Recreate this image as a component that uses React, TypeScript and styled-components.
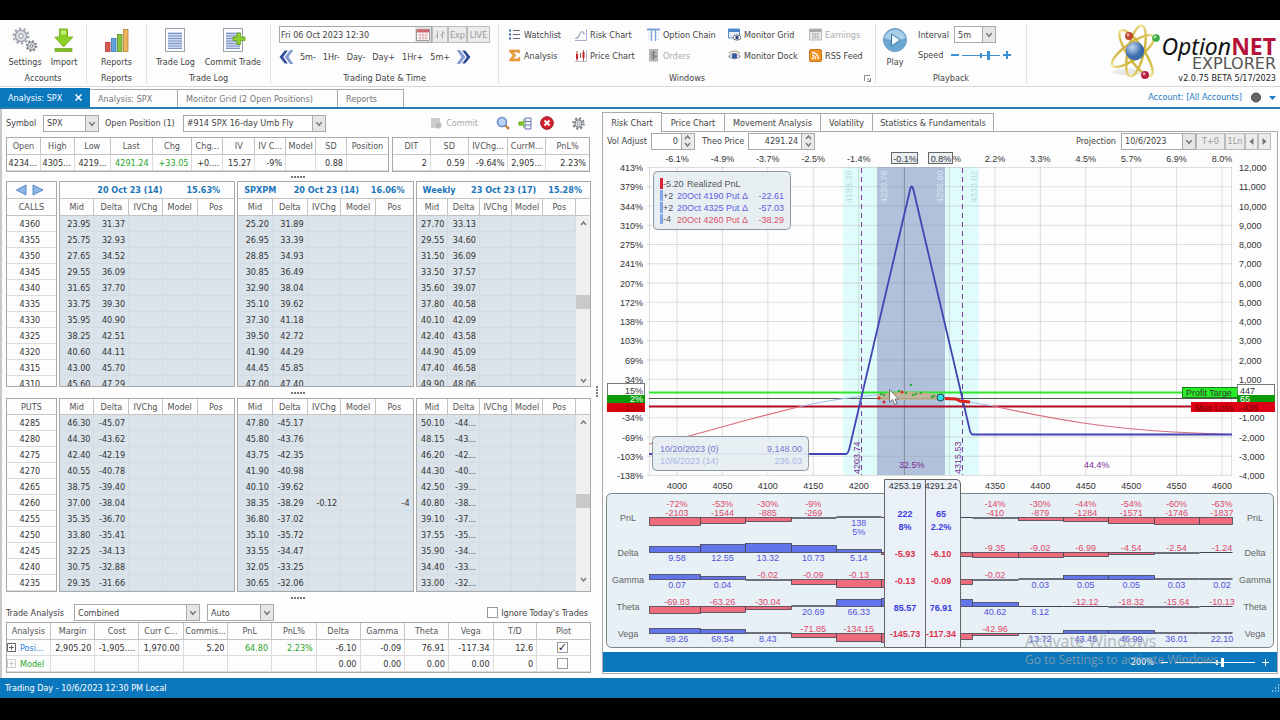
import React from "react";
import styled, { createGlobalStyle } from "styled-components";

const ui = `"DejaVu Sans Condensed", "Noto Sans", sans-serif`;
const plotFont = `"Liberation Sans", Arial, sans-serif`;
const blue = "#0b78be";
const line = "#a9a9a9";

const Global = createGlobalStyle`
  *, *::before, *::after { box-sizing: border-box; }
  body { margin: 0; background: #000; color: #444; font: 9px/12px ${ui}; }
  button, input, select { font: inherit; color: inherit; margin: 0; padding: 0; border: 0; background: none; border-radius: 0; outline: 0; }
  svg { display: block; flex: none; }
  h1, p { margin: 0; font-weight: 400; }
`;

const Screen = styled.div`padding: 20px 0 23px;`;
const AppWindow = styled.main`background: #fdfdfd;`;

/* ---------- ribbon ---------- */
const Ribbon = styled.header`
  display: flex; height: 67px; padding-top: 4px; border-bottom: 1px solid #d8d8d8;
`;
const Group = styled.section<{ $w: number }>`
  display: flex; flex-direction: column; justify-content: space-between;
  flex: 0 1 ${p => p.$w}px; height: 60px; padding: 0 6px;
  border-right: 1px solid #e2e2e2;
`;
const GroupBody = styled.div<{ $around?: boolean }>`
  display: flex; justify-content: ${p => (p.$around ? "space-around" : "flex-start")}; gap: ${p => (p.$around ? 4 : 8)}px;
`;
const Caption = styled.div`
  position: relative; text-align: center; line-height: 12px; white-space: nowrap;
  svg { position: absolute; right: -2px; top: 3px; }
`;
const BigButton = styled.button`
  display: flex; flex-direction: column; align-items: center; gap: 3px; padding-top: 3px; white-space: nowrap;
`;
const Stack = styled.div`display: flex; flex-direction: column; gap: 6px; width: 100%; padding: 2px 2px 0;`;
const Line = styled.div<{ $gap?: number; $between?: boolean }>`
  display: flex; align-items: center; gap: ${p => p.$gap ?? 0}px;
  justify-content: ${p => (p.$between ? "space-between" : "flex-start")};
`;
const DateBox = styled.div`
  display: flex; flex: 1; height: 17px; border: 1px solid ${line};
  input { flex: 1; min-width: 0; padding-left: 1px; }
  button { width: 16px; background: #e4dede; display: grid; place-items: center; }
`;
const FlatButton = styled.button<{ $w: number }>`
  width: ${p => p.$w}px; height: 17px; border: 1px solid #bcbcbc; background: #ebebeb; color: #999;
  display: grid; place-items: center;
`;
const StepButton = styled.button`height: 16px; white-space: nowrap;`;
const ToolGrid = styled.div`
  display: grid; grid-template-columns: 66px 73px 81px 81px 60px; grid-auto-rows: 21px; padding-left: 3px;
`;
const Tool = styled.button<{ $off?: boolean }>`
  display: flex; align-items: center; gap: 3px; white-space: nowrap; color: ${p => (p.$off ? "#aaa" : "inherit")};
`;
const Brand = styled.div`
  display: flex; justify-content: flex-end; flex: 1; padding-right: 4px; color: #111;
`;
const BrandText = styled.div`display: flex; flex-direction: column; align-items: flex-end; padding-top: 10px;`;
const BrandName = styled.h1`
  font: italic 23px/24px "Noto Sans", sans-serif;
  b { font-style: normal; font-weight: 700; color: #b5123a; }
`;
const BrandSub = styled.p`font: 16px/12px "DejaVu Sans", sans-serif; color: #555;`;
const Version = styled.p`line-height: 17px; color: #222;`;

/* ---------- tabs ---------- */
const TabStrip = styled.nav`
  display: flex; align-items: flex-end; height: 22px; border-bottom: 2px solid #2a7db4;
`;
const DocTab = styled.button<{ $w: number; $active?: boolean }>`
  width: ${p => p.$w}px; height: ${p => (p.$active ? 19 : 18)}px; padding: 0 8px; text-align: left;
  display: flex; align-items: center; justify-content: space-between; white-space: nowrap;
  background: ${p => (p.$active ? blue : "#fdfdfd")}; color: ${p => (p.$active ? "#fff" : "#777")};
  border: solid ${line}; border-width: ${p => (p.$active ? "0" : "1px 1px 0 0")};
`;
const Account = styled.a`
  display: flex; align-items: center; align-self: center; gap: 8px; margin-left: auto; padding-right: 4px; color: #1b7bc4; text-decoration: none;
`;

/* ---------- shared controls ---------- */
const Picker = styled.span<{ $w: number }>`
  display: inline-flex; position: relative; width: ${p => p.$w}px; height: 17px; border: 1px solid ${line}; background: #fff;
  select { appearance: none; flex: 1; min-width: 0; padding-left: 3px; }
  svg { position: absolute; right: 0; top: 0; width: 13px; height: 15px; background: #e6e6e6; border-left: 1px solid ${line}; pointer-events: none; }
`;
const Spin = styled.span<{ $w: number }>`
  display: inline-flex; width: ${p => p.$w}px; height: 17px; border: 1px solid ${line}; background: #fff;
  input { flex: 1; min-width: 0; text-align: right; padding-right: 3px; }
`;
const SpinButtons = styled.span`
  display: flex; flex-direction: column; width: 13px; background: #eaeaea; border-left: 1px solid ${line};
  button { flex: 1; display: grid; place-items: center; }
`;
const Slider = styled.input<{ $c: string; $w: number; $mark: number }>`
  appearance: none; width: ${p => p.$w}px; height: 10px;
  background:
    linear-gradient(${p => p.$c}, ${p => p.$c}) ${p => p.$mark}% 50% / 2px 5px no-repeat,
    linear-gradient(${p => p.$c}, ${p => p.$c}) center / 100% 1px no-repeat;
  &::-webkit-slider-thumb { appearance: none; width: 3px; height: 9px; background: ${p => p.$c}; }
`;

/* ---------- work area ---------- */
const Work = styled.div`display: grid; grid-template-columns: 602fr 678fr;`;
const Left = styled.section`
  position: relative; border-left: 2px solid #c8c8c8; padding: 0 11px 5px 4px; min-width: 0;
`;
const Bar = styled.div<{ $h: number }>`
  display: flex; align-items: center; height: ${p => p.$h}px; white-space: nowrap;
`;
const Space = styled.span<{ $w?: number }>`flex: ${p => (p.$w ? `0 1 ${p.$w}px` : "1")};`;
const IconButton = styled.button`display: flex; align-items: center; gap: 4px; color: #aaa;`;
const Splitter = styled.div<{ $h: number }>`
  height: ${p => p.$h}px; display: grid; place-items: center;
  &::after { content: ""; width: 15px; height: 2px; background: repeating-linear-gradient(90deg, #777 0 2px, transparent 2px 3px); }
`;
const SideGrip = styled.div`
  position: absolute; right: 4px; top: 277px; width: 2px; height: 12px;
  background: repeating-linear-gradient(#777 0 2px, transparent 2px 3px);
`;
const Pair = styled.div`display: grid; grid-template-columns: 383fr 198fr; gap: 3px; margin-right: 1px;`;
const Chains = styled.div<{ $h: number }>`
  display: grid; grid-template-columns: 51fr 177fr 177fr 176fr; gap: 2px; height: ${p => p.$h}px; overflow: hidden;
`;
const Frame = styled.div`border: 1px solid ${line}; overflow: hidden; min-width: 0;`;
const Grid = styled.table<{ $shade?: boolean; $center?: boolean }>`
  width: 100%; table-layout: fixed; border-collapse: separate; border-spacing: 0; color: #333;
  th { height: 17px; padding: 0; font-weight: 400; color: #555; line-height: 14px; overflow: hidden; white-space: nowrap;
    border-right: 1px solid #c4c4c4; border-bottom: 1px solid #c4c4c4; }
  td { height: 16px; padding: 0 3px 0 0; line-height: 14px; text-align: ${p => (p.$center ? "center" : "right")};
    white-space: nowrap; overflow: hidden;
    background: ${p => (p.$shade ? "#dae2ea" : "transparent")};
    border-right: 1px solid ${p => (p.$shade ? "#d3dbe3" : "#dcdcdc")}; border-bottom: 1px solid ${p => (p.$shade ? "#d3dbe3" : "#dcdcdc")}; }
  th:last-child, td:last-child { border-right: 0; }
  &&& td.scroll { padding: 0; background: #f0f0f0; vertical-align: top; border: 0; }
`;
const HeadRow = styled.tr<{ $h: number }>`th { height: ${p => p.$h}px; }`;
const Expiry = styled.div<{ $wide?: boolean }>`
  display: flex; justify-content: flex-end; gap: ${p => (p.$wide ? 24 : 12)}px; padding: 0 ${p => (p.$wide ? 14 : 8)}px 0 6px;
  font-weight: 700; color: #1b75bb;
  span:first-child { margin-right: auto; }
`;
const ScrollTrack = styled.div`
  display: flex; flex-direction: column; align-items: center; justify-content: space-between; height: 172px; padding: 5px 0;
  i { width: 14px; height: 14px; background: #c9c9c9; }
`;
const Tone = styled.span<{ $c: string }>`color: ${p => p.$c};`;
const NameCell = styled.span<{ $c: string }>`
  display: flex; align-items: center; gap: 4px; color: ${p => p.$c};
`;
const PlotCell = styled.span`display: flex; align-items: center; justify-content: center; height: 14px;`;
const Check = styled.input`
  appearance: none; display: inline-grid; place-items: center; vertical-align: middle; width: 11px; height: 11px; border: 1px solid #999; background: #fff;
  &:checked::after { content: "✓"; font: bold 11px/9px "DejaVu Sans", sans-serif; color: #222; }
`;
const CheckLabel = styled.label`display: flex; align-items: center; gap: 3px; padding-right: 3px;`;

/* ---------- risk panel ---------- */
const Right = styled.section`padding: 3px 2px 0 0; min-width: 0; position: relative;`;
const PanelTabs = styled.nav`display: flex; align-items: flex-end; height: 20px; border-bottom: 1px solid ${line};`;
const PanelTab = styled.button<{ $w: number; $active?: boolean }>`
  width: ${p => p.$w}px; height: ${p => (p.$active ? 20 : 18)}px; margin-bottom: ${p => (p.$active ? -1 : 0)}px;
  border: solid ${line}; border-width: 1px 1px 0 ${p => (p.$active ? 1 : 0)}px; background: #fdfdfd; white-space: nowrap;
`;
const Panel = styled.div`border: solid ${line}; border-width: 0 1px 1px; padding-bottom: 1px;`;
const Plot = styled.svg`
  width: 100%; height: auto; font-family: ${plotFont}; font-size: 9px; fill: #333;
`;
const ZoomBar = styled.div`
  display: flex; align-items: center; justify-content: flex-end; gap: 7px; height: 20px; padding-right: 8px; background: ${blue}; color: #fff;
`;
const Watermark = styled.div`
  position: absolute; right: 55px; bottom: 10px; width: 200px; color: rgba(160, 165, 170, .75); font: 12px/17px "Open Sans", sans-serif; white-space: nowrap; pointer-events: none;
  strong { display: block; font-size: 16px; line-height: 20px; font-weight: 400; }
`;
const Status = styled.footer`display: flex; justify-content: space-between; align-items: center; height: 20px; padding: 0 0 0 5px; background: ${blue}; color: #fff;`;

/* ---------- icons ---------- */
const Gear = ({ s = 14, c = "#8d929a" }: { s?: number; c?: string }) => (
  <svg width={s} height={s} viewBox="0 0 16 16">
    <circle cx="8" cy="8" r="6.4" fill="none" stroke={c} strokeWidth="2.6" strokeDasharray="2.5 2.52" />
    <circle cx="8" cy="8" r="4.4" fill="#dfe2e7" stroke={c} strokeWidth="1.6" />
    <circle cx="8" cy="8" r="1.7" fill="#fff" stroke={c} />
  </svg>
);
const Settings = () => (
  <svg width="26" height="26" viewBox="0 0 26 26">
    <circle cx="9" cy="9" r="7.4" fill="none" stroke="#a3a8b0" strokeWidth="2.2" strokeDasharray="2.4 2.25" />
    <circle cx="9" cy="9" r="5.6" fill="#dfe2e7" stroke="#9ba0a8" strokeWidth="1.4" />
    <circle cx="9" cy="9" r="2.2" fill="#fff" stroke="#888" />
    <circle cx="19.5" cy="19" r="5" fill="none" stroke="#868b94" strokeWidth="1.8" strokeDasharray="1.9 2.02" />
    <circle cx="19.5" cy="19" r="3.8" fill="#d9dce2" stroke="#7f848d" strokeWidth="1.2" />
    <circle cx="19.5" cy="19" r="1.3" fill="#fff" stroke="#777" />
  </svg>
);
const Import = () => (
  <svg width="20" height="26" viewBox="0 0 20 26">
    <path d="M5.500 2h8v8h5.500L9.500 20 0.800 10h4.700z" fill="#8ccf23" stroke="#7db32d" />
    <path d="M7 3.500h5v4H7z" fill="#c2ec79" />
    <rect x="1" y="21.500" width="17" height="3" fill="#7cbd1e" stroke="#669c16" strokeWidth=".6" />
  </svg>
);
const BarsIcon = () => (
  <svg width="26" height="26" viewBox="0 0 26 26" strokeWidth=".8">
    <rect x="1.5" y="15.5" width="4.5" height="9" fill="#d95b54" stroke="#a93632" />
    <rect x="7.5" y="11.5" width="4.5" height="13" fill="#5fa1dc" stroke="#3a73ad" />
    <rect x="13.5" y="7.5" width="4.5" height="17" fill="#86c440" stroke="#5a9224" />
    <rect x="19.5" y="2.5" width="4.5" height="22" fill="#eab35c" stroke="#b98333" />
  </svg>
);
const Sheet = ({ plus }: { plus?: boolean }) => (
  <svg width="26" height="26" viewBox="0 0 26 26">
    <path d="M3.500 1.500h19v23h-19z" fill="#fbfcfe" stroke="#9aa2ae" />
    <path d="M6 5h14v17H6z" fill="#c9d6ef" />
    <path d="M6 6.500h14M6 9h14M6 11.500h14M6 14h14M6 16.500h14M6 19h14M6 21.500h14" stroke="#7f96c4" />
    {plus && <path d="M17 6h3.500v4h4.500v3.500h-4.500v4H17v-4h-4v-3.500h4z" fill="#8fce2f" stroke="#5f9c17" strokeWidth=".8" />}
  </svg>
);
const Double = ({ flip }: { flip?: boolean }) => (
  <svg width="14" height="14" viewBox="0 0 14 14">
    <g transform={flip ? "matrix(-1 0 0 1 14 0)" : undefined}>
      <path d="M5.800 .5h3L4.200 7l4.600 6.500h-3L.5 7z" fill="#2f4c99" />
      <path d="M11 .5h2.700L9 7l4.700 6.500H11L6.200 7z" fill="#8aa2d8" stroke="#4a66b0" strokeWidth=".5" />
    </g>
  </svg>
);
const Play = () => (
  <svg width="26" height="26" viewBox="0 0 26 26">
    <circle cx="13" cy="13" r="11.5" fill="#6ba7d3" stroke="#6f9dc0" />
    <path d="M2.500 11a10.800 10.800 0 0 1 21 0q-10 5-21 0z" fill="#a9cfe9" />
    <path d="M9.500 7l9 6-9 6z" fill="#f5faff" stroke="#3873a8" />
  </svg>
);
const Caret = () => (
  <svg viewBox="0 0 13 15"><path d="M3.500 6l3 3.500 3-3.500" fill="none" stroke="#777" strokeWidth="1.600" /></svg>
);
const Mini = ({ up }: { up?: boolean }) => (
  <svg width="7" height="5" viewBox="0 0 7 5"><path d={up ? "M1 4l2.500-3L6 4" : "M1 1l2.500 3L6 1"} fill="none" stroke="#777" strokeWidth="1.400" /></svg>
);
const Expander = ({ dim }: { dim?: boolean }) => (
  <svg width="9" height="9" viewBox="0 0 9 9" stroke={dim ? "#ccc" : "#666"} fill="none"><path d="M.5.5h8v8h-8zM2 4.500h5M4.500 2v5" /></svg>
);
const Nav = () => (
  <svg width="48" height="12" viewBox="0 0 48 12" fill="#8db8e6" stroke="#3b76bd" strokeWidth=".8">
    <path d="M19 1v10L9.500 6zM26 1v10L36 6z" />
  </svg>
);
const toolIcons: Record<string, React.ReactNode> = {
  Watchlist: <><path d="M1 2.500h2M1 6.500h2M1 10.500h2" stroke="#3767ae" strokeWidth="2" /><path d="M5 2.500h7M5 6.500h7M5 10.500h7" stroke="#667" strokeWidth="1.200" /></>,
  Analysis: <path d="M1.500 1h10v3h-1l-1-1H5l3 3.500L4.700 10H9.500l1-1.500h1.300V12H1.500v-1.300L5 6.500 1.500 2.500z" fill="#eba03a" stroke="#cf7f1c" strokeWidth=".5" />,
  "Risk Chart": <><path d="M12.500 1v11.500H1" fill="none" stroke="#aac" /><path d="M1 10.500q3 0 4-3t3-4q2 0 2 3" fill="none" stroke="#9ab" strokeWidth="1.200" /></>,
  "Price Chart": <><path d="M3 2v10M6.500 4v5M9.500 1v11" stroke="#a55" /><path d="M2 5h2v5H2zM8.500 3h2v6h-2z" fill="#c22" /><path d="M12.500 1v11.500H1" fill="none" stroke="#bbc" /></>,
  "Option Chain": <><path d="M0 1.500h13" stroke="#7aa3da" strokeWidth="2" /><path d="M1 5h3M9 5h3M1 8h3M9 8h3M1 11h3M9 11h3" stroke="#d5dfec" /><path d="M4.500 2v11M8.500 2v11" stroke="#7aa3da" strokeWidth="1.300" /></>,
  Orders: <><path d="M2 0h9v12.500H2z" fill="#b5b5b5" /><path d="M8.500 4q-4-1.500-4 .7T8.500 7t-4 1.700M6.500 2v9" fill="none" stroke="#777" /></>,
  "Monitor Grid": <><path d="M.5 1h11v9H.5z" fill="#e4edf8" stroke="#5b8fd0" /><path d="M.5 1h11v3H.5z" fill="#4b86cc" /><ellipse cx="9" cy="9.5" rx="4" ry="2.6" fill="#fff" stroke="#666" /><circle cx="9" cy="9.5" r="1.7" fill="#27408b" /></>,
  "Monitor Dock": <><path d="M.5 7.500Q6.500 1 12.500 7.500 6.500 12 .5 7.500z" fill="#e6ebf5" stroke="#888" /><circle cx="6.5" cy="7" r="2.6" fill="#3459a6" /><path d="M1 4q5.500-4 11 0" fill="none" stroke="#987" /></>,
  Earnings: <><path d="M.5 1h12v11H.5z" fill="#e8e8e8" stroke="#bbb" /><path d="M.5 2.500h12" stroke="#aaa" strokeWidth="3" /><path d="M3 6h7M3 9h7M4 5v6M6.500 5v6M9 5v6" stroke="#bbb" /></>,
  "RSS Feed": <><rect x=".5" y=".5" width="12" height="12" rx="1.5" fill="#ee9527" stroke="#c9741a" /><path d="M3 3.500a6.500 6.500 0 0 1 6.500 6.500M3 6.300A3.700 3.700 0 0 1 6.700 10" fill="none" stroke="#fff" strokeWidth="1.300" /><circle cx="3.8" cy="9.3" r="1.1" fill="#fff" /></>,
};
const tools = ["Watchlist", "Risk Chart", "Option Chain", "Monitor Grid", "Earnings", "Analysis", "Price Chart", "Orders", "Monitor Dock", "RSS Feed"];

const Atom = () => (
  <svg width="52" height="58" viewBox="0 0 52 58">
    <defs>
      <radialGradient id="nucleus" cx=".35" cy=".3"><stop offset="0" stopColor="#c5dbf3" /><stop offset="1" stopColor="#3c6cad" /></radialGradient>
      <linearGradient id="orbit" x2="1"><stop offset="0" stopColor="#cdb23a" /><stop offset=".5" stopColor="#f4e79c" /><stop offset="1" stopColor="#cfb232" /></linearGradient>
    </defs>
    <ellipse cx="20" cy="48" rx="16" ry="3.5" fill="#e8e8e8" />
    <g fill="none" stroke="url(#orbit)" strokeWidth="2.400">
      <ellipse cx="27" cy="27" rx="8" ry="26" transform="rotate(13 27 27)" />
      <ellipse cx="27" cy="29" rx="8" ry="27" transform="rotate(-34 27 29)" />
      <ellipse cx="24" cy="27" rx="8" ry="25" transform="rotate(55 24 27)" />
    </g>
    <circle cx="26" cy="27" r="9.3" fill="url(#nucleus)" />
    <circle cx="20" cy="12" r="4" fill="#c04a33" /><circle cx="19" cy="11" r="1.4" fill="#f0b5a5" />
    <circle cx="47" cy="14" r="3.8" fill="#38a83d" /><circle cx="46" cy="13" r="1.4" fill="#b5eab5" />
    <circle cx="36" cy="51" r="4" fill="#b8203f" /><circle cx="35" cy="50" r="1.4" fill="#efa5b5" />
  </svg>
);

/* ---------- data ---------- */
const calls: string[][] = `4360 23.95 31.37 25.20 31.89 27.70 33.13
4355 25.75 32.93 26.95 33.39 29.55 34.60
4350 27.65 34.52 28.85 34.93 31.50 36.09
4345 29.55 36.09 30.85 36.49 33.50 37.57
4340 31.65 37.70 32.90 38.04 35.60 39.07
4335 33.75 39.30 35.10 39.62 37.80 40.58
4330 35.95 40.90 37.30 41.18 40.10 42.09
4325 38.25 42.51 39.50 42.72 42.40 43.58
4320 40.60 44.11 41.90 44.29 44.90 45.09
4315 43.00 45.70 44.45 45.85 47.40 46.58
4310 45.60 47.29 47.00 47.40 49.90 48.06`.split("\n").map(r => r.split(" "));
const puts: string[][] = `4285 46.30 -45.07 47.80 -45.17 50.10 -44...
4280 44.30 -43.62 45.80 -43.76 48.15 -43...
4275 42.40 -42.19 43.75 -42.35 46.20 -42...
4270 40.55 -40.78 41.90 -40.98 44.30 -40...
4265 38.75 -39.40 40.10 -39.62 42.50 -39...
4260 37.00 -38.04 38.35 -38.29 40.80 -38...
4255 35.35 -36.70 36.80 -37.02 39.10 -37...
4250 33.80 -35.41 35.10 -35.72 37.55 -35...
4245 32.25 -34.13 33.55 -34.47 35.90 -34...
4240 30.75 -32.88 32.05 -33.25 34.40 -33...
4235 29.35 -31.66 30.65 -32.06 33.00 -32...`.split("\n").map(r => r.split(" "));
const expiries = [["", "20 Oct 23 (14)", "15.63%"], ["SPXPM", "20 Oct 23 (14)", "16.06%"], ["Weekly", "23 Oct 23 (17)", "15.28%"]];

const Cols = ({ w }: { w: number[] }) => {
  const total = w.reduce((a, b) => a + b, 0);
  return <colgroup>{w.map((n, i) => <col key={i} style={{ width: `${(n / total) * 100}%` }} />)}</colgroup>;
};

function Chain({ rows, title, withExpiry, height }: { rows: string[][]; title: string; withExpiry?: boolean; height: number }) {
  const h = withExpiry ? 17 : 16;
  return (
    <Chains $h={height}>
      <Frame>
        <Grid $center>
          <thead>
            {withExpiry && <HeadRow $h={17}><th><Nav /></th></HeadRow>}
            <HeadRow $h={h}><th>{title}</th></HeadRow>
          </thead>
          <tbody>{rows.map(r => <tr key={r[0]}><td>{r[0]}</td></tr>)}</tbody>
        </Grid>
      </Frame>
      {[0, 1, 2].map(g => (
        <Frame key={g}>
          <Grid $shade>
            <Cols w={g === 2 ? [32, 32, 32, 32, 33, 14] : [35, 35, 34, 35, 37]} />
            <thead>
              {withExpiry && (
                <HeadRow $h={17}><th colSpan={g === 2 ? 6 : 5}>
                  <Expiry $wide={g === 0}>{expiries[g].map((t, i) => <span key={i}>{t}</span>)}</Expiry>
                </th></HeadRow>
              )}
              <HeadRow $h={h}>
                {["Mid", "Delta", "IVChg", "Model", "Pos"].map(t => <th key={t}>{t}</th>)}
                {g === 2 && <th />}
              </HeadRow>
            </thead>
            <tbody>
              {rows.map((r, i) => {
                const held = g === 1 && r[0] === "4260" && !withExpiry;
                return (
                  <tr key={r[0]}>
                    <td>{r[1 + g * 2]}</td><td>{r[2 + g * 2]}</td><td>{held && "-0.12"}</td><td /><td>{held && "-4"}</td>
                    {g === 2 && i === 0 && (
                      <td className="scroll" rowSpan={rows.length}><ScrollTrack><Mini up /><i /><Mini /></ScrollTrack></td>
                    )}
                  </tr>
                );
              })}
            </tbody>
          </Grid>
        </Frame>
      ))}
    </Chains>
  );
}

/* ---------- risk plot ---------- */
const px = (price: number) => 74 + (price - 4000) * 0.9083;
const strikes = Array.from({ length: 13 }, (_, i) => 4000 + i * 50);
const moves = ["-6.1%", "-4.9%", "-3.7%", "-2.5%", "-1.4%", "", "", "2.2%", "3.3%", "4.5%", "5.7%", "6.9%", "8.0%"];
const percents = [413, 379, 344, 310, 275, 241, 207, 172, 138, 103, 69, 34, 0, -34, -69, -103, -138];

type Strip = { name: string; base: number; bars: number[]; values: string[]; pct?: string[] };
const strips: Strip[] = [
  { name: "PnL", base: 367, bars: [8, 6, 4, 1, -1, 0, 0, 1, 3, 4, 6, 7, 7], values: ["-2103", "-1544", "-885", "-269", "138", "", "", "-410", "-879", "-1284", "-1571", "-1746", "-1837"], pct: ["-72%", "-53%", "-30%", "-9%", "5%", "", "", "-14%", "-30%", "-44%", "-54%", "-60%", "-63%"] },
  { name: "Delta", base: 402, bars: [-6, -8, -9, -7, -3, 2, 4, 5, 5, 4, 2, 1, 0], values: ["9.58", "12.55", "13.32", "10.73", "5.14", "", "", "-9.35", "-9.02", "-6.99", "-4.54", "-2.54", "-1.24"] },
  { name: "Gamma", base: 429, bars: [-5, -3, 1, 5, 8, 8, 5, 1, -1, -4, -4, -1, -1], values: ["0.07", "0.04", "-0.02", "-0.09", "-0.13", "", "", "-0.02", "0.03", "0.05", "0.05", "0.03", "0.02"] },
  { name: "Theta", base: 456, bars: [7, 6, 3, -1, -7, -8, -7, -4, 0, 0, 1, 1, 0], values: ["-69.83", "-63.26", "-30.04", "20.69", "66.33", "", "", "40.62", "8.12", "-12.12", "-18.32", "-15.64", "-10.13"] },
  { name: "Vega", base: 483, bars: [-5, -4, -1, 4, 8, 9, 6, 2, 0, -3, -3, -1, -1], values: ["89.26", "68.54", "8.43", "-71.85", "-134.15", "", "", "-42.96", "13.72", "43.45", "46.99", "36.01", "22.10"] },
];
const focus = [
  { x: 302, price: "4253.19", v: ["222", "8%", "-5.93", "-0.13", "85.57", "-145.73"] },
  { x: 338, price: "4291.24", v: ["65", "2.2%", "-6.10", "-0.09", "76.91", "-117.34"] },
];
const focusY = [367, 380, 407, 434, 461, 487];
const green = "#3a3", red = "#d22";
const legs = [["#5f5fe0", "20Oct 4190 Put Δ", "-22.61"], ["#5f5fe0", "20Oct 4325 Put Δ", "-57.03"], ["#e0506a", "20Oct 4260 Put Δ", "-38.29"]];

function RiskPlot() {
  return (
    <Plot viewBox="0 0 674 502" role="img" aria-label="Risk chart">
      <rect x="240" y="17" width="136" height="308" fill="#dffcfa" />
      <rect x="274" y="17" width="68" height="308" fill="#b1c1db" />
      <g stroke="#888" strokeOpacity=".26">
        {strikes.map(s => <path key={s} d={`M${px(s)} 17V325`} />)}
        {percents.map((_, i) => <path key={i} d={`M44 ${17.5 + i * 19.25}H629`} />)}
        <path d="M46.500 17V325M628.500 17V325" />
      </g>
      {strikes.map((s, i) => (
        <g key={s} textAnchor="middle">
          <text x={px(s)} y="12">{moves[i]}</text>
          {s !== 4250 && s !== 4300 && <text x={px(s)} y="339">{s}</text>}
        </g>
      ))}
      {percents.map((p, i) => p !== 0 && (
        <g key={p}>
          <text x="40" y={21 + i * 19.25} textAnchor="end">{p}%</text>
          <text x="636" y={21 + i * 19.25}>{(12000 - i * 1000).toLocaleString("en-US")}</text>
        </g>
      ))}
      <g fill="#e9eff3" stroke="#666"><rect x="288.5" y="2.5" width="26" height="11" /><rect x="325.5" y="2.5" width="24" height="11" /></g>
      <g textAnchor="middle"><text x="302" y="12">-0.1%</text><text x="338" y="12">0.8%</text><text x="354" y="12">%</text></g>

      <g fill="#b5dcdc">
        <text transform="translate(249 53) rotate(-90)">4183.36</text>
        <text transform="translate(374 53) rotate(-90)">4333.02</text>
      </g>
      <g fill="#d9e3f0">
        <text transform="translate(284 53) rotate(-90)">4220.78</text>
        <text transform="translate(340 53) rotate(-90)">4295.60</text>
      </g>
      <path d="M301.500 17V325" stroke="#8a93a3" />
      <g stroke="#7b3b9b" strokeDasharray="5 4"><path d="M258.500 18V325" /><path d="M359.500 18V325" /></g>

      <path d="M46 242.500H580" stroke="#2be82b" strokeWidth="2" />
      <path d="M46 248.500H634" stroke="#555" />
      <path d="M46 256.500H590" stroke="#b00a22" strokeWidth="2" />
      <path d="M274 246Q300 238 338 245L342 247V250H274z" fill="#c2b48f" opacity=".8" />
      <path d="M46 294Q64 291 88 285.500L144 270 197 256.500" fill="none" stroke="#e0697a" strokeWidth="1.200" />
      <path d="M197 256.500Q235 248 274 245" fill="none" stroke="#a5b8e8" strokeWidth="1.200" />
      <path d="M274 245Q305 240 338 247" fill="none" stroke="#dda08c" />
      <path d="M338 247L390 256" fill="none" stroke="#a5b8e8" />
      <path d="M390 256Q440 267 480 273T570 282L628 284.500" fill="none" stroke="#d97080" strokeWidth="1.200" />
      <path d="M46 304H243Q245 304 246.500 298L307 40Q308.500 33 310.500 40L367 281Q368 284.500 370 284.500H629" fill="none" stroke="#4343b4" strokeWidth="1.800" />
      <path d="M342 248.500L353 249 357 251 367 252" fill="none" stroke={red} strokeWidth="3" />
      {[[308, 235], [281, 245], [287, 246], [296, 241], [303, 243], [310, 245], [313, 244], [318, 243], [329, 247], [331, 246], [278, 244]].map(([x, y]) => <circle key={x} cx={x} cy={y} r="1.3" fill={green} />)}
      {[[276, 248], [281, 252], [299, 242]].map(([x, y]) => <circle key={x} cx={x} cy={y} r="1.5" fill={red} />)}
      <circle cx="337.5" cy="247.5" r="3.5" fill="#2ee0e6" stroke="#145" />
      <path d="M286.500 239.500V252L289.500 249.500 292 254.500 294 253.500 292 249H295.500z" fill="#fff" stroke="#555" strokeWidth=".8" />

      <g fill="#7d2a94">
        <text transform="translate(257 324) rotate(-90)">4203.74</text>
        <text transform="translate(358 324) rotate(-90)">4315.53</text>
        <text x="296" y="318">32.5%</text><text x="481" y="318">44.4%</text>
      </g>

      <rect x="4.5" y="233.5" width="37" height="12" fill="#fff" stroke="#777" />
      <rect x="4" y="245" width="38" height="8" fill="#0a9a0a" /><rect x="4" y="253" width="38" height="9" fill="#d9000f" />
      <g textAnchor="end"><text x="40" y="244">15%</text><text x="40" y="252" fill="#fff">2%</text><text x="40" y="261" fill="#900">-15%</text></g>
      <rect x="579.5" y="237.5" width="56" height="10" fill="#27ec27" stroke="#197f19" />
      <text x="583" y="246">Profit Targe</text>
      <rect x="588" y="252" width="84" height="10" fill="#dc0016" />
      <text x="592" y="261" fill="#700">Max Loss</text><text x="637" y="261" fill="#700">-436</text>
      <rect x="634.5" y="234.5" width="37" height="11" fill="#fff" stroke="#777" />
      <rect x="634" y="245" width="38" height="7" fill="#0a9a0a" />
      <text x="637" y="244">447</text><text x="637" y="252" fill="#fff">65</text>

      <rect x="50.5" y="21.5" width="137" height="58" rx="4" fill="#e6eef2" fillOpacity=".93" stroke="#8d979d" />
      <rect x="57" y="28" width="3" height="11" fill="#e0213c" />
      <path d="M58.500 40V51M58.500 52V63M58.500 64V74" stroke="#86a5e6" strokeWidth="3" />
      <g fill="#555">
        <text x="60" y="37">-5.20</text><text x="84" y="37">Realized PnL</text><text x="60" y="49">+2</text><text x="60" y="61">+2</text><text x="60" y="72">-4</text>
      </g>
      {legs.map(([c, t, v], i) => (
        <g key={t} fill={c}><text x="74" y={49 + i * 12}>{t}</text><text x="181" y={49 + i * 12} textAnchor="end">{v}</text></g>
      ))}
      <rect x="49.5" y="286.5" width="156" height="34" rx="4" fill="#e6eef2" fillOpacity=".94" stroke="#8d979d" />
      <g fill="#7676cf"><text x="57" y="302">10/20/2023 (0)</text><text x="199" y="302" textAnchor="end">9,148.00</text></g>
      <g fill="#a9b8e6"><text x="57" y="314">10/6/2023 (14)</text><text x="199" y="314" textAnchor="end">236.03</text></g>

      <rect x="3.5" y="343.5" width="667" height="154" rx="5" fill="#e7f0f5" stroke="#7c8588" />
      {strips.map(s => (
        <g key={s.name}>
          <text x="25" y={s.base + 4} fill="#666" textAnchor="middle">{s.name}</text>
          <text x="652" y={s.base + 4} fill="#666" textAnchor="middle">{s.name}</text>
          {s.bars.map((b, i) => {
            const x0 = i ? Math.round(px(strikes[i] - 25)) : 46;
            const x1 = i < 12 ? Math.round(px(strikes[i] + 25)) : 629;
            return Math.abs(b) < 2
              ? <path key={i} d={`M${x0 + .5} ${s.base + .5 + b / 2}H${x1 + .5}`} stroke="#445" strokeWidth={1 + Math.abs(b) / 2} />
              : <rect key={i} x={x0 + .5} y={s.base + .5 + Math.min(b, 0)} width={x1 - x0} height={Math.abs(b)} fill={b > 0 ? "#ee6b7b" : "#6274ea"} stroke="#445" strokeWidth=".8" />;
          })}
          {s.values.map((v, i) => {
            const neg = v.startsWith("-");
            return (
              <g key={i} fill={neg ? "#e0486a" : "#5252e0"} textAnchor="middle">
                <text x={px(strikes[i])} y={s.base + (neg ? -1 : 9)}>{v}</text>
                {s.pct && <text x={px(strikes[i])} y={s.base + (neg ? -10 : 18)}>{s.pct[i]}</text>}
              </g>
            );
          })}
        </g>
      ))}
      <path d="M281.500 329.500H354Q357.500 330 357.500 334V497.500H281.500z" fill="#e9f0f7" stroke="#666" />
      <path d="M322.500 329.500V497.500" stroke="#666" />
      {focus.map(f => (
        <g key={f.price} textAnchor="middle">
          <text x={f.x} y="339">{f.price}</text>
          {f.v.map((v, i) => <text key={v} x={f.x} y={focusY[i]} fontWeight="700" fill={v.startsWith("-") ? "#e0304c" : "#3c3ce0"}>{v}</text>)}
        </g>
      ))}
    </Plot>
  );
}

const Select = ({ w, value, label }: { w: number; value: string; label: string }) => (
  <Picker $w={w}><select aria-label={label} defaultValue={value}><option>{value}</option></select><Caret /></Picker>
);
const Stepper = ({ w, value, id }: { w: number; value: string; id: string }) => (
  <Spin $w={w}><input id={id} defaultValue={value} /><SpinButtons><button aria-label="Increase"><Mini up /></button><button aria-label="Decrease"><Mini /></button></SpinButtons></Spin>
);
const gain = (t: string) => <Tone $c="#2ba52b">{t}</Tone>;

export default function App() {
  return (
    <Screen>
      <Global />
      <AppWindow>
        <Ribbon>
          <Group $w={87}>
            <GroupBody $around><BigButton><Settings />Settings</BigButton><BigButton><Import />Import</BigButton></GroupBody>
            <Caption>Accounts</Caption>
          </Group>
          <Group $w={60}>
            <GroupBody $around><BigButton><BarsIcon />Reports</BigButton></GroupBody>
            <Caption>Reports</Caption>
          </Group>
          <Group $w={124}>
            <GroupBody $around><BigButton><Sheet />Trade Log</BigButton><BigButton><Sheet plus />Commit Trade</BigButton></GroupBody>
            <Caption>Trade Log</Caption>
          </Group>
          <Group $w={228}>
            <Stack>
              <Line>
                <DateBox>
                  <input aria-label="Trading date" defaultValue="Fri 06 Oct 2023 12:30" />
                  <button aria-label="Open calendar">
                    <svg width="14" height="13" viewBox="0 0 14 13"><path d="M.5 1.500h13v11H.5z" fill="#fff" stroke="#999" /><path d="M1 3h12" stroke="#d2686e" strokeWidth="3" /><path d="M2 7h10M2 10h10M4 5v7M7 5v7M10 5v7" stroke="#d9a0a5" strokeWidth=".8" /></svg>
                  </button>
                </DateBox>
                <FlatButton $w={16} aria-label="Chart step"><svg width="10" height="10" viewBox="0 0 10 10"><path d="M2.500 1v8M0 6h2M7.500 1v8M5 5h2M8 3h2" stroke="#aaa" /></svg></FlatButton>
                <FlatButton $w={19}>Exp</FlatButton><FlatButton $w={23}>LIVE</FlatButton>
              </Line>
              <Line $between>
                <StepButton aria-label="Back"><Double /></StepButton>
                {["5m-", "1Hr-", "Day-", "Day+", "1Hr+", "5m+"].map(t => <StepButton key={t}>{t}</StepButton>)}
                <StepButton aria-label="Forward"><Double flip /></StepButton>
                <Space $w={12} />
              </Line>
            </Stack>
            <Caption>Trading Date &amp; Time</Caption>
          </Group>
          <Group $w={374}>
            <ToolGrid>
              {tools.map(t => (
                <Tool key={t} $off={t === "Earnings" || t === "Orders"}><svg width="13" height="13" viewBox="0 0 13 13">{toolIcons[t]}</svg>{t}</Tool>
              ))}
            </ToolGrid>
            <Caption>Windows<svg width="7" height="7" viewBox="0 0 7 7"><path d="M.5 6V.5H6M3 3l3 3M6.500 3v3.500H3" fill="none" stroke="#888" /></svg></Caption>
          </Group>
          <Group $w={151}>
            <GroupBody>
              <BigButton><Play />Play</BigButton>
              <Stack>
                <Line $gap={2}><Space $w={34}>Interval</Space><Select w={42} value="5m" label="Interval" /></Line>
                <Line $gap={3}><Space $w={30}>Speed</Space>
                  <svg width="8" height="8" viewBox="0 0 8 8"><path d="M0 4h8" stroke="#3d8fd0" strokeWidth="2" /></svg>
                  <Slider $c="#3d8fd0" $w={38} $mark={50} type="range" aria-label="Speed" defaultValue={72} />
                  <svg width="8" height="8" viewBox="0 0 8 8"><path d="M0 4h8M4 0v8" stroke="#3d8fd0" strokeWidth="2" /></svg>
                </Line>
              </Stack>
            </GroupBody>
            <Caption>Playback</Caption>
          </Group>
          <Brand>
            <Atom />
            <BrandText>
              <BrandName>Option<b>NET</b></BrandName>
              <BrandSub>EXPLORER</BrandSub>
              <Version>v2.0.75 BETA 5/17/2023</Version>
            </BrandText>
          </Brand>
        </Ribbon>

        <TabStrip>
          <DocTab $w={90} $active>Analysis: SPX<svg width="7" height="7" viewBox="0 0 7 7"><path d="M.5.5l6 6M6.500.5l-6 6" stroke="#fff" strokeWidth="1.500" /></svg></DocTab>
          <DocTab $w={88}>Analysis: SPX</DocTab>
          <DocTab $w={160}>Monitor Grid (2 Open Positions)</DocTab>
          <DocTab $w={66}>Reports</DocTab>
          <Account href="#">Account: [All Accounts]<svg width="26" height="11" viewBox="0 0 26 11"><circle cx="6" cy="5.5" r="4.5" fill="#666" stroke="#444" /><path d="M19 4h7l-3.500 4z" fill="#1b7bc4" /></svg></Account>
        </TabStrip>

        <Work>
          <Left>
            <Bar $h={28}>
              <Space $w={37}>Symbol</Space><Select w={56} value="SPX" label="Symbol" /><Space $w={6} />
              Open Position (1)<Space $w={8} /><Select w={143} value="#914 SPX 16-day Umb Fly" label="Open position" />
              <Space />
              <IconButton disabled><svg width="12" height="12" viewBox="0 0 12 12"><path d="M1 1h9v10H1z" fill="#ccc" /><circle cx="8" cy="8" r="3.5" fill="#bbb" stroke="#ddd" /></svg>Commit</IconButton>
              <Space $w={18} />
              <Line $gap={8}>
                <IconButton aria-label="Search"><svg width="14" height="14" viewBox="0 0 14 14"><path d="M9 9l4 4" stroke="#c58a45" strokeWidth="2.500" /><circle cx="6" cy="6" r="4.5" fill="#b9d4f5" stroke="#6a8fd0" strokeWidth="1.600" /></svg></IconButton>
                <IconButton aria-label="Columns"><svg width="14" height="13" viewBox="0 0 14 13"><path d="M7 1h6v11H7z" fill="#eef3fb" stroke="#6a7fb0" /><path d="M7 4.500h6M7 8h6" stroke="#6a7fb0" /><path d="M6 2v3H1v3h5v3" fill="#8ccf23" stroke="#5f9c17" /></svg></IconButton>
                <IconButton aria-label="Close position"><svg width="14" height="14" viewBox="0 0 14 14"><circle cx="7" cy="7" r="6.3" fill="#d0202c" stroke="#9c1620" /><path d="M4.500 4.500l5 5M9.500 4.500l-5 5" stroke="#fff" strokeWidth="2" /></svg></IconButton>
              </Line>
              <Space $w={18} /><IconButton aria-label="Options"><Gear c="#7b8087" s={13} /></IconButton><Space $w={6} />
            </Bar>

            <Pair>
              <Frame>
                <Grid>
                  <Cols w={[34, 34, 36, 42, 40, 31, 32, 31, 30, 31, 41]} />
                  <thead><tr>{["Open", "High", "Low", "Last", "Chg", "Chg...", "IV", "IV C...", "Model", "SD", "Position"].map(t => <th key={t}>{t}</th>)}</tr></thead>
                  <tbody><tr><td>4234...</td><td>4305...</td><td>4219...</td><td>{gain("4291.24")}</td><td>{gain("+33.05")}</td><td>+0....</td><td>15.27</td><td>-9%</td><td /><td>0.88</td><td /></tr></tbody>
                </Grid>
              </Frame>
              <Frame>
                <Grid>
                  <Cols w={[38, 38, 40, 38, 43]} />
                  <thead><tr>{["DIT", "SD", "IVChg...", "CurrM...", "PnL%"].map(t => <th key={t}>{t}</th>)}</tr></thead>
                  <tbody><tr><td>2</td><td>0.59</td><td>-9.64%</td><td>2,905...</td><td>2.23%</td></tr></tbody>
                </Grid>
              </Frame>
            </Pair>
            <Splitter $h={9} />
            <Chain rows={calls} title="CALLS" withExpiry height={206} />
            <Splitter $h={11} />
            <Chain rows={puts} title="PUTS" height={194} />
            <Splitter $h={11} />
            <Bar $h={19}>
              <Space $w={68}>Trade Analysis</Space><Select w={126} value="Combined" label="Trade analysis" /><Space $w={7} /><Select w={67} value="Auto" label="Mode" />
              <Space /><CheckLabel><Check type="checkbox" />Ignore Today's Trades</CheckLabel>
            </Bar>
            <Frame>
              <Grid>
                <Cols w={[44, 45, 44, 45, 45, 44, 45, 44, 45, 44, 45, 44, 53]} />
                <thead><tr>{["Analysis", "Margin", "Cost", "Curr C...", "Commis...", "PnL", "PnL%", "Delta", "Gamma", "Theta", "Vega", "T/D", "Plot"].map(t => <th key={t}>{t}</th>)}</tr></thead>
                <tbody>
                  <tr>
                    <td><NameCell $c="#2a7de0"><Expander />Posi...</NameCell></td>
                    <td>2,905.20</td><td>-1,905....</td><td>1,970.00</td><td>5.20</td><td>{gain("64.80")}</td><td>{gain("2.23%")}</td><td>-6.10</td><td>-0.09</td><td>76.91</td><td>-117.34</td><td>12.6</td>
                    <td><PlotCell><Check type="checkbox" defaultChecked aria-label="Plot position" /></PlotCell></td>
                  </tr>
                  <tr>
                    <td><NameCell $c="#2ba52b"><Expander dim />Model</NameCell></td>
                    <td /><td /><td /><td /><td /><td /><td>0.00</td><td>0.00</td><td>0.00</td><td>0.00</td><td>0</td>
                    <td><PlotCell><Check type="checkbox" aria-label="Plot model" /></PlotCell></td>
                  </tr>
                </tbody>
              </Grid>
            </Frame>
            <SideGrip />
          </Left>

          <Right>
            <PanelTabs>
              <PanelTab $w={60} $active>Risk Chart</PanelTab><PanelTab $w={63}>Price Chart</PanelTab><PanelTab $w={96}>Movement Analysis</PanelTab>
              <PanelTab $w={52}>Volatility</PanelTab><PanelTab $w={121}>Statistics &amp; Fundamentals</PanelTab>
            </PanelTabs>
            <Panel>
              <Bar $h={18}>
                <Space $w={4} /><label htmlFor="vol">Vol Adjust</label><Space $w={4} /><Stepper id="vol" w={44} value="0" />
                <Space $w={7} /><label htmlFor="theo">Theo Price</label><Space $w={4} /><Stepper id="theo" w={67} value="4291.24" />
                <Space />
                Projection<Space $w={5} /><Select w={75} value="10/6/2023" label="Projection" />
                <FlatButton $w={29}>T+0</FlatButton><FlatButton $w={20}>1Ln</FlatButton>
                <FlatButton $w={13} aria-label="Previous day"><svg width="5" height="7" viewBox="0 0 5 7"><path d="M4.500 0v7L.5 3.500z" fill="#777" /></svg></FlatButton>
                <FlatButton $w={13} aria-label="Next day"><svg width="5" height="7" viewBox="0 0 5 7"><path d="M.5 0v7l4-3.500z" fill="#777" /></svg></FlatButton>
                <Space $w={6} />
              </Bar>
              <RiskPlot />
              <ZoomBar>
                200%
                <svg width="7" height="7" viewBox="0 0 7 7"><path d="M0 3.500h7" stroke="#fff" /></svg>
                <Slider $c="#fff" $w={80} $mark={52} type="range" aria-label="Zoom" defaultValue={60} />
                <svg width="7" height="7" viewBox="0 0 7 7"><path d="M0 3.500h7M3.500 0v7" stroke="#fff" /></svg>
              </ZoomBar>
            </Panel>
            <Watermark><strong>Activate Windows</strong>Go to Settings to activate Windows.</Watermark>
          </Right>
        </Work>
        <Status>Trading Day - 10/6/2023 12:30 PM Local
          <svg width="9" height="9" viewBox="0 0 9 9"><path d="M7 1h1M7 4h1M4 4h1M7 7h1M4 7h1M1 7h1" stroke="#cde" strokeWidth="1.500" /></svg>
        </Status>
      </AppWindow>
    </Screen>
  );
}
